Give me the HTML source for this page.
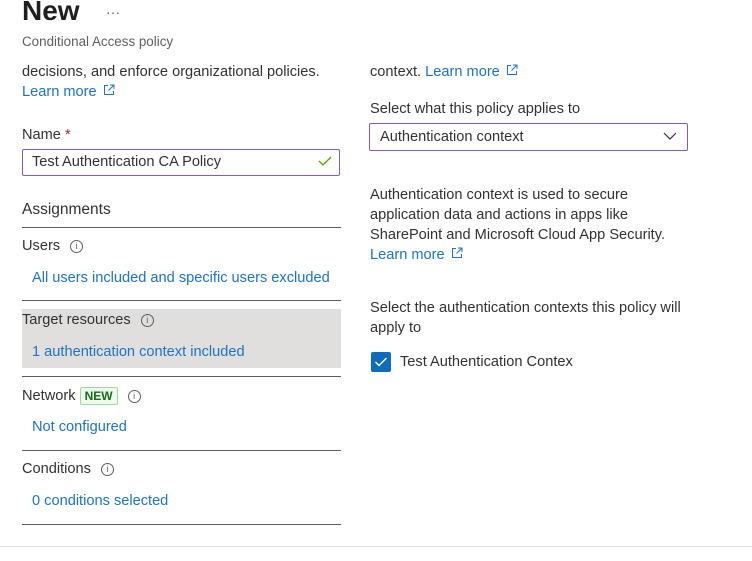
<!DOCTYPE html>
<html><head><style>
body{margin:0;width:752px;height:561px;background:#fff;font-family:"Liberation Sans",sans-serif;color:#323130;position:relative;overflow:hidden;font-size:14.6px}
.a{position:absolute;white-space:nowrap}
.l{color:#1b74c9}
.hr{position:absolute;left:22px;width:319px;height:1px;background:#605e5c}
.i{display:inline-block;width:11px;height:11px;border:1px solid #605e5c;border-radius:50%;font-size:9px;line-height:11px;text-align:center;vertical-align:1px;margin-left:10px;color:#605e5c}
.ext{display:inline-block;margin-left:6px;vertical-align:0px}
</style></head><body>
<svg width="0" height="0" style="position:absolute"><defs><symbol id="e" viewBox="0 0 12 12"><path d="M5 1.5H1.5V10.5H10.5V7 M7 1H11V5 M11 1L5.5 6.5" stroke="#1b74c9" stroke-width="1" fill="none"/></symbol></defs></svg>
<div class="a" style="left:22px;top:-5px;font-size:28px;font-weight:bold;color:#201f1e">New</div>
<div class="a" style="left:106px;top:4px;font-size:14px;color:#605e5c">···</div>
<div class="a" style="left:22px;top:34px;font-size:13.4px;color:#605e5c">Conditional Access policy</div>
<div class="a" style="left:22px;top:64px">decisions, and enforce organizational policies.</div>
<div class="a l" style="left:22px;top:84px">Learn more<svg class="ext" width="12" height="12"><use href="#e"/></svg></div>
<div class="a" style="left:22px;top:127px">Name <span style="color:#a4262c">*</span></div>
<div class="a" style="left:22px;top:149px;width:316px;height:25px;border:1px solid #8a5bb0;border-radius:2px"></div>
<div class="a" style="left:32px;top:154px">Test Authentication CA Policy</div>
<svg class="a" style="left:318px;top:155px" width="14" height="12"><path d="M1 6 L5 10 L13 2" stroke="#57a300" stroke-width="1.3" fill="none"/></svg>
<div class="a" style="left:22px;top:201px;font-size:15.5px">Assignments</div>
<div class="hr" style="top:227px"></div>
<div class="a" style="left:22px;top:238px">Users<span class="i">i</span></div>
<div class="a l" style="left:32px;top:270px">All users included and specific users excluded</div>
<div class="hr" style="top:300px"></div>
<div class="a" style="left:22px;top:309px;width:319px;height:59px;background:#e1dfdd"></div>
<div class="a" style="left:22px;top:312px">Target resources<span class="i">i</span></div>
<div class="a l" style="left:32px;top:344px">1 authentication context included</div>
<div class="hr" style="top:376px"></div>
<div class="a" style="left:22px;top:387px">Network <span style="display:inline-block;border:1px solid #9fd89f;background:#f1faf1;color:#0e700e;font-weight:bold;font-size:12px;padding:1px 4px;border-radius:2px">NEW</span><span class="i">i</span></div>
<div class="a l" style="left:32px;top:419px">Not configured</div>
<div class="hr" style="top:450px"></div>
<div class="a" style="left:22px;top:461px">Conditions<span class="i">i</span></div>
<div class="a l" style="left:32px;top:493px">0 conditions selected</div>
<div class="hr" style="top:524px"></div>
<div class="a" style="left:0;top:546px;width:752px;height:1px;background:#e1dfdd"></div>

<div class="a" style="left:370px;top:64px">context. <span class="l">Learn more<svg class="ext" width="12" height="12"><use href="#e"/></svg></span></div>
<div class="a" style="left:370px;top:101px">Select what this policy applies to</div>
<div class="a" style="left:369px;top:123px;width:317px;height:26px;border:1px solid #8a5bb0;border-radius:2px"></div>
<div class="a" style="left:380px;top:129px">Authentication context</div>
<svg class="a" style="left:663px;top:132px" width="14" height="9"><path d="M1 1 L7 7 L13 1" stroke="#323130" stroke-width="1.2" fill="none"/></svg>
<div class="a" style="left:370px;top:185px;line-height:20px">Authentication context is used to secure<br>application data and actions in apps like<br>SharePoint and Microsoft Cloud App Security.<br><span class="l">Learn more<svg class="ext" width="12" height="12"><use href="#e"/></svg></span></div>
<div class="a" style="left:370px;top:298px;line-height:20px">Select the authentication contexts this policy will<br>apply to</div>
<div class="a" style="left:371px;top:352px;width:20px;height:20px;background:#0f6cbd;border-radius:2px"></div>
<svg class="a" style="left:374px;top:356px" width="14" height="12"><path d="M1.5 6 L5 9.5 L12.5 2" stroke="#fff" stroke-width="1.4" fill="none"/></svg>
<div class="a" style="left:400px;top:354px">Test Authentication Contex</div>
</body></html>
